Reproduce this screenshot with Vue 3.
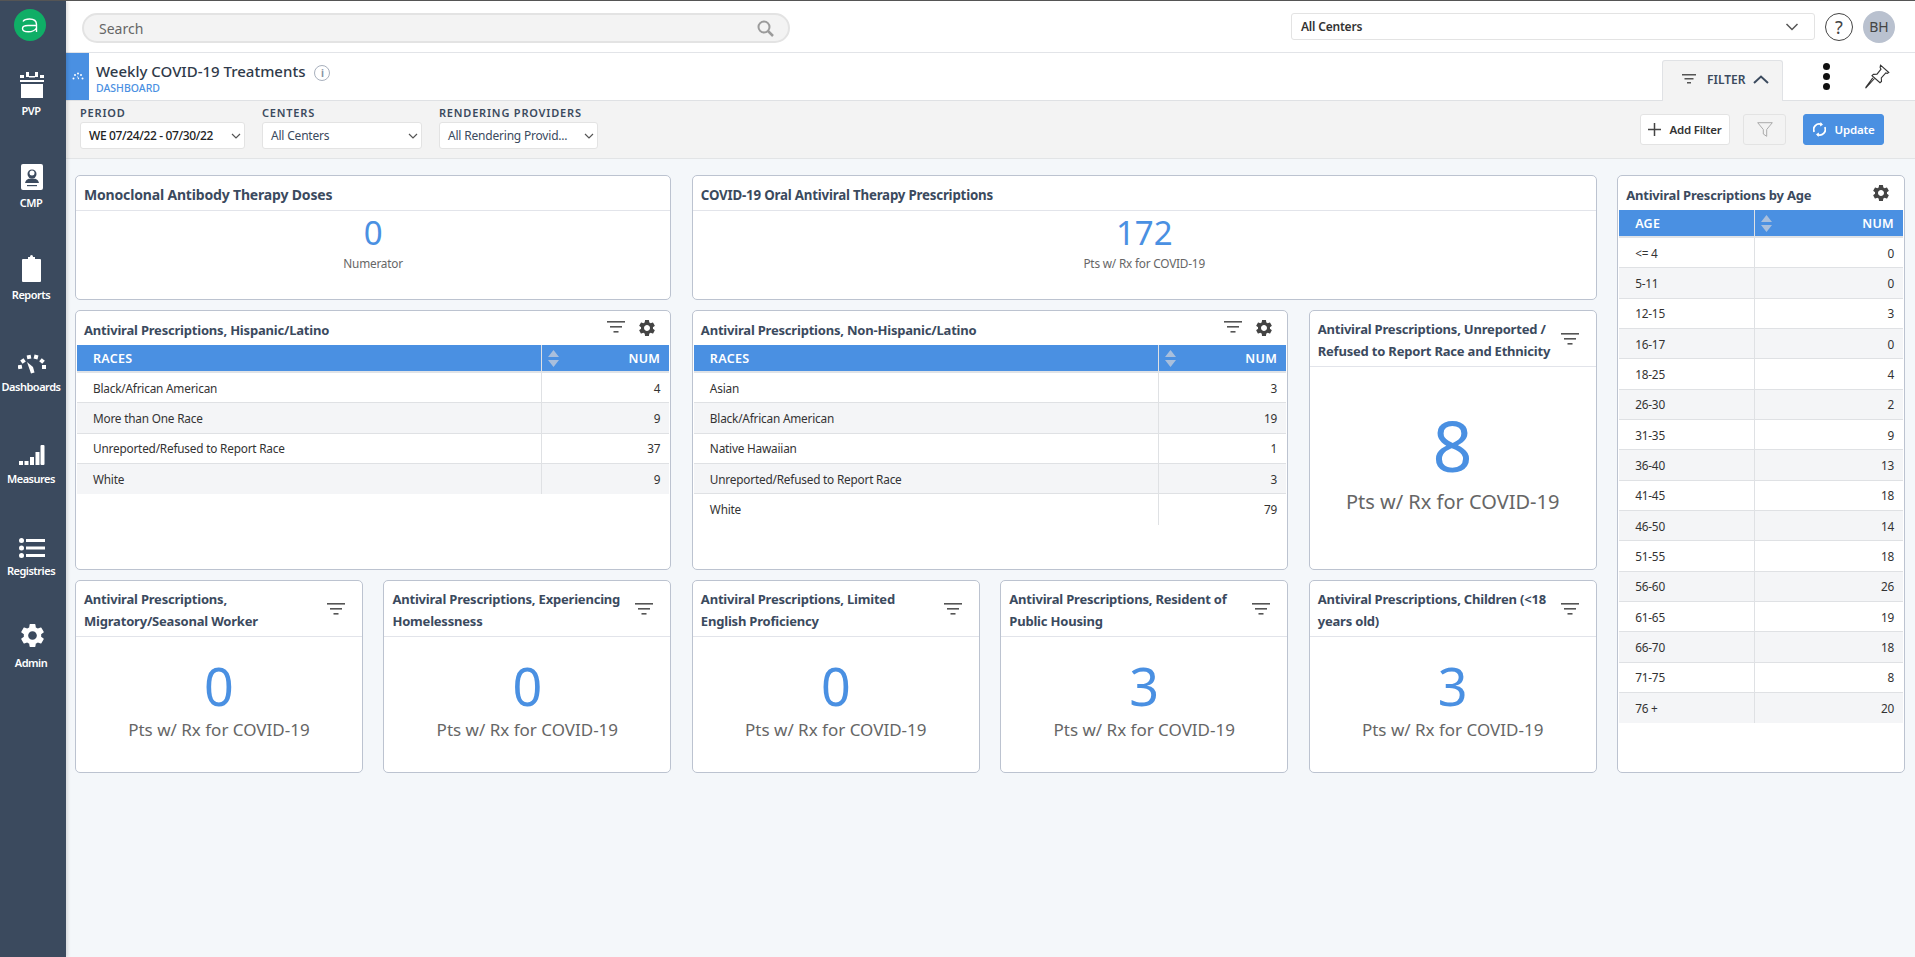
<template>
  <div class="app">
    <aside class="sidebar">
      <div class="logo">
        <svg width="32" height="32" viewBox="0 0 32 32">
          <circle cx="16" cy="16" r="16" fill="#0fae66" />
          <path d="M9 12.500C10 10.800 12.500 10 15.500 10c4.500 0 7 2 7 5.500V23M22.500 16.500H14c-3.500 0-5.500 1-5.500 3 0 2.300 2.500 3.300 6 3.300 3.500 0 6.500-1.300 8-3.800" fill="none" stroke="#fff" stroke-width="1.400" />
        </svg>
      </div>
      <nav class="nav">
        <a v-for="item in navItems" :key="item.label" class="nav-item">
          <span class="nav-icon" v-html="item.icon"></span>
          <span class="nav-label">{{ item.label }}</span>
        </a>
      </nav>
    </aside>

    <div class="content">
      <header class="topbar">
        <div class="search">
          <span>Search</span>
          <svg width="17" height="17" viewBox="0 0 17 17" fill="none" stroke="#9b9b9b" stroke-width="2">
            <circle cx="7" cy="7" r="5.500" />
            <path d="M11 11l5 5" stroke-width="2.500" />
          </svg>
        </div>
        <div class="center-select">
          <span>All Centers</span>
          <svg width="14" height="8" viewBox="0 0 14 8" fill="none" stroke="#555" stroke-width="1.500"><path d="M1.500 1l5.500 5.500L12.500 1" /></svg>
        </div>
        <div class="help">?</div>
        <div class="avatar">BH</div>
      </header>

      <section class="titlebar">
        <div class="title-tab">
          <svg width="12" height="9" viewBox="0 0 12 9" fill="#fff">
            <circle cx="1.500" cy="6.500" r="1" /><circle cx="3" cy="3" r="1" /><circle cx="6" cy="1.500" r="1" /><circle cx="9" cy="3" r="1" /><circle cx="10.500" cy="6.500" r="1" />
            <path d="M5 3.500l2.200 3-1 1z" />
          </svg>
        </div>
        <div class="title-text">
          <h1>Weekly COVID-19 Treatments <span class="info">i</span></h1>
          <div class="subtitle">DASHBOARD</div>
        </div>
        <div class="filter-tab">
          <svg class="filter-ico" width="14" height="11" viewBox="0 0 14 11" fill="#555"><rect width="14" height="1.500" /><rect x="2.500" y="4" width="9" height="1.500" /><rect x="5" y="8" width="4" height="1.500" /></svg>
          <span>FILTER</span>
          <svg width="16" height="9" viewBox="0 0 16 9" fill="none" stroke="#3b4a5e" stroke-width="2"><path d="M1 8l7-6.500L15 8" /></svg>
        </div>
        <div class="kebab"><i></i><i></i><i></i></div>
        <svg class="pin" width="25" height="25" viewBox="0 0 25 25" fill="none" stroke="#333" stroke-width="1.100">
          <path d="M15.500 1.200l8.300 7.300-1.500 1-1.500-.6-4.500 5 .2 3.500-1.500 1.300-8-7 1.400-1.300 3.600-.2 4-5-.9-1.800z" />
          <path d="M9.500 14.500L1 23.800l-.2-.5 7-9.500" />
        </svg>
      </section>

      <section class="filterbar">
        <div v-for="f in filters" :key="f.label" class="filter-field">
          <label>{{ f.label }}</label>
          <div class="select" :class="{ strong: f.strong }" :style="{ width: f.width + 'px' }">
            <span>{{ f.value }}</span>
            <svg width="10" height="6" viewBox="0 0 10 6" fill="none" stroke="#555" stroke-width="1.200"><path d="M1 1l4 4 4-4" /></svg>
          </div>
        </div>
        <div class="filter-actions">
          <button class="btn add">
            <svg width="13" height="13" viewBox="0 0 13 13" stroke="#444" stroke-width="1.500"><path d="M6.500 0v13M0 6.500h13" /></svg>
            Add Filter
          </button>
          <button class="btn funnel">
            <svg width="16" height="15" viewBox="0 0 16 15" fill="none" stroke="#aaa" stroke-width="1"><path d="M.7.700h14.600L9.700 7.500v6.800L6.300 12V7.500z" /></svg>
          </button>
          <button class="btn update">
            <svg width="13" height="15" viewBox="0 0 13 15" fill="none" stroke="#fff" stroke-width="1.800">
              <path d="M1.200 9.800A5.500 5.500 0 0 1 8.500 2.500M11.800 5.200A5.500 5.500 0 0 1 4.500 12.500" />
              <path d="M7.500 0l2.500 2.800L7 4.500zM5.500 15L3 12.200 6 10.500z" fill="#fff" stroke="none" />
            </svg>
            Update
          </button>
        </div>
      </section>

      <main class="grid">
        <div v-for="card in cards" :key="card.title" class="card" :class="card.area">
          <div class="card-head" :class="{ two: card.twoLine, plain: card.size === 'sm' }">
            <h2>{{ card.title }}</h2>
            <svg v-if="card.filter" class="head-filter" width="18" height="13" viewBox="0 0 18 13" fill="#555"><rect width="18" height="1.600" /><rect x="3" y="5" width="12" height="1.600" /><rect x="6.500" y="10" width="5" height="1.600" /></svg>
            <svg v-if="card.gear" class="head-gear" width="20" height="20" viewBox="0 0 24 24" fill="#444"><path d="M19.140 12.940c.04-.3.060-.61.060-.94 0-.32-.02-.64-.07-.94l2.030-1.580a.49.49 0 0 0 .12-.61l-1.920-3.320a.488.488 0 0 0-.59-.22l-2.390.96c-.5-.38-1.030-.7-1.620-.94l-.36-2.540a.484.484 0 0 0-.48-.41h-3.840c-.24 0-.43.170-.47.410l-.36 2.540c-.59.240-1.130.570-1.620.940l-2.390-.96c-.22-.08-.47 0-.59.220L2.740 8.870c-.12.210-.08.470.120.610l2.030 1.580c-.05.300-.09.630-.09.940s.02.640.070.940l-2.030 1.580a.49.49 0 0 0-.12.61l1.920 3.320c.12.220.370.290.590.220l2.390-.96c.5.380 1.030.7 1.620.94l.36 2.540c.05.240.240.410.480.410h3.840c.24 0 .44-.17.470-.41l.36-2.540c.59-.24 1.130-.56 1.620-.94l2.390.96c.22.080.470 0 .590-.22l1.920-3.320c.12-.22.070-.47-.12-.61l-2.010-1.580zM12 15.600c-1.980 0-3.600-1.620-3.600-3.600s1.620-3.600 3.600-3.600 3.600 1.620 3.600 3.600-1.620 3.600-3.600 3.600z" /></svg>
          </div>

          <div v-if="card.rows" class="table">
            <div class="thead">
              <div class="th first" :style="{ width: card.split + 'px' }">{{ card.col }}</div>
              <div class="th second">
                <svg width="11" height="17" viewBox="0 0 11 17" fill="#a9bfdc"><path d="M5.500 0L11 7H0zM0 10h11l-5.500 7z" /></svg>
                <span>NUM</span>
              </div>
            </div>
            <div v-for="(row, i) in card.rows" :key="row[0]" class="tr" :class="{ alt: i % 2 === 1, last: i === card.rows.length - 1 }">
              <div class="td first" :style="{ width: card.split + 'px' }">{{ row[0] }}</div>
              <div class="td second">{{ row[1] }}</div>
            </div>
          </div>

          <div v-else class="kpi" :class="card.size">
            <div class="kpi-value">{{ card.value }}</div>
            <div class="kpi-label">{{ card.label }}</div>
          </div>
        </div>
      </main>
    </div>
  </div>
</template>

<script setup>
const gauge = `<svg width="28" height="20" viewBox="0 0 28 20" fill="#fff"><rect x="0" y="11" width="4" height="4" transform="rotate(-10 2 13)"/><rect x="3" y="5" width="4" height="4" transform="rotate(-35 5 7)"/><rect x="9" y="1" width="4" height="4" transform="rotate(-10 11 3)"/><rect x="16" y="1" width="4" height="4" transform="rotate(15 18 3)"/><rect x="22" y="5" width="4" height="4" transform="rotate(40 24 7)"/><rect x="24" y="11" width="4" height="4"/><path d="M9 8l6 5 1.500 5.500-3.500 1z"/></svg>`

const navItems = [
  {
    label: 'PVP',
    icon: `<svg width="24" height="27" viewBox="0 0 24 27" fill="#fff"><rect x="0" y="9" width="24" height="2" /><rect x="0" y="13" width="22" height="14" transform="translate(1 0)"/><rect x="0" y="4" width="4" height="3"/><rect x="20" y="4" width="4" height="3"/><rect x="6" y="1" width="3" height="5"/><rect x="15" y="1" width="3" height="5"/><rect x="9" y="5" width="6" height="1.500"/></svg>`,
  },
  {
    label: 'CMP',
    icon: `<svg width="22" height="26" viewBox="0 0 22 26"><rect width="22" height="26" rx="2" fill="#fff"/><circle cx="11" cy="10" r="4.500" fill="#3b4a5e"/><path d="M4 19c1-4 4-4.500 7-4.500s6 .5 7 4.500z" fill="#3b4a5e"/><circle cx="11" cy="9" r="2.500" fill="#fff"/><rect x="6" y="21" width="10" height="1.200" fill="#3b4a5e"/></svg>`,
  },
  {
    label: 'Reports',
    icon: `<svg width="20" height="27" viewBox="0 0 20 27" fill="#fff"><rect y="4" width="19" height="23" rx="1" /><rect x="6" y="2" width="7" height="4" /><rect x="8" y="0" width="3" height="4" rx="1.500" /></svg>`,
  },
  { label: 'Dashboards', icon: gauge },
  {
    label: 'Measures',
    icon: `<svg width="26" height="21" viewBox="0 0 26 21" fill="#fff"><rect y="16" width="4" height="4"/><rect x="5.500" y="16" width="4" height="4"/><rect x="11" y="12" width="4" height="8"/><rect x="16.500" y="7" width="4" height="13"/><rect x="21.500" y="0" width="4" height="20" rx="1"/></svg>`,
  },
  {
    label: 'Registries',
    icon: `<svg width="26" height="20" viewBox="0 0 26 20" fill="#fff"><circle cx="2.500" cy="2.500" r="2.500"/><circle cx="2.500" cy="10" r="2.500"/><circle cx="2.500" cy="17.500" r="2.500"/><rect x="7" y="1" width="19" height="3"/><rect x="7" y="8.500" width="19" height="3"/><rect x="7" y="16" width="19" height="3"/></svg>`,
  },
  {
    label: 'Admin',
    icon: `<svg width="29" height="29" viewBox="0 0 24 24" fill="#fff"><path d="M19.140 12.940c.04-.3.060-.61.060-.94 0-.32-.02-.64-.07-.94l2.030-1.580a.49.49 0 0 0 .12-.61l-1.920-3.320a.488.488 0 0 0-.59-.22l-2.390.96c-.5-.38-1.030-.7-1.620-.94l-.36-2.540a.484.484 0 0 0-.48-.41h-3.840c-.24 0-.43.170-.47.410l-.36 2.540c-.59.240-1.130.570-1.620.940l-2.390-.96c-.22-.08-.47 0-.59.220L2.740 8.870c-.12.210-.08.470.120.610l2.030 1.580c-.05.300-.09.630-.09.940s.02.640.070.940l-2.030 1.580a.49.49 0 0 0-.12.61l1.920 3.320c.12.220.370.290.590.220l2.390-.96c.5.380 1.030.7 1.620.94l.36 2.540c.05.240.240.410.480.410h3.840c.24 0 .44-.17.470-.41l.36-2.540c.59-.24 1.130-.56 1.620-.94l2.390.96c.22.080.470 0 .590-.22l1.920-3.320c.12-.22.070-.47-.12-.61l-2.010-1.580zM12 15.600c-1.980 0-3.600-1.620-3.600-3.600s1.620-3.600 3.600-3.600 3.600 1.620 3.600 3.600-1.620 3.600-3.600 3.600z"/></svg>`,
  },
]

const filters = [
  { label: 'PERIOD', value: 'WE 07/24/22 - 07/30/22', width: 165, strong: true },
  { label: 'CENTERS', value: 'All Centers', width: 160 },
  { label: 'RENDERING PROVIDERS', value: 'All Rendering Provid...', width: 159 },
]

const pts = 'Pts w/ Rx for COVID-19'

const cards = [
  { title: 'Monoclonal Antibody Therapy Doses', area: 'a-mono', value: '0', label: 'Numerator', size: 'sm' },
  { title: 'COVID-19 Oral Antiviral Therapy Prescriptions', area: 'a-oral', value: '172', label: pts, size: 'sm' },
  {
    title: 'Antiviral Prescriptions by Age',
    area: 'a-age',
    gear: true,
    col: 'AGE',
    split: 136,
    rows: [
      ['<= 4', 0], ['5-11', 0], ['12-15', 3], ['16-17', 0], ['18-25', 4], ['26-30', 2], ['31-35', 9], ['36-40', 13],
      ['41-45', 18], ['46-50', 14], ['51-55', 18], ['56-60', 26], ['61-65', 19], ['66-70', 18], ['71-75', 8], ['76 +', 20],
    ],
  },
  {
    title: 'Antiviral Prescriptions, Hispanic/Latino',
    area: 'a-his',
    filter: true,
    gear: true,
    col: 'RACES',
    split: 465,
    rows: [['Black/African American', 4], ['More than One Race', 9], ['Unreported/Refused to Report Race', 37], ['White', 9]],
  },
  {
    title: 'Antiviral Prescriptions, Non-Hispanic/Latino',
    area: 'a-non',
    filter: true,
    gear: true,
    col: 'RACES',
    split: 465,
    rows: [['Asian', 3], ['Black/African American', 19], ['Native Hawaiian', 1], ['Unreported/Refused to Report Race', 3], ['White', 79]],
  },
  { title: 'Antiviral Prescriptions, Unreported / Refused to Report Race and Ethnicity', area: 'a-unr', filter: true, twoLine: true, value: '8', label: pts, size: 'lg' },
  { title: 'Antiviral Prescriptions, Migratory/Seasonal Worker', filter: true, twoLine: true, value: '0', label: pts, size: 'md' },
  { title: 'Antiviral Prescriptions, Experiencing Homelessness', filter: true, twoLine: true, value: '0', label: pts, size: 'md' },
  { title: 'Antiviral Prescriptions, Limited English Proficiency', filter: true, twoLine: true, value: '0', label: pts, size: 'md' },
  { title: 'Antiviral Prescriptions, Resident of Public Housing', filter: true, twoLine: true, value: '3', label: pts, size: 'md' },
  { title: 'Antiviral Prescriptions, Children (<18 years old)', filter: true, twoLine: true, value: '3', label: pts, size: 'md' },
]
</script>

<style scoped>
.app {
  display: flex;
  height: 957px;
  font-family: "Noto Sans", "Open Sans", sans-serif;
  color: #333;
  background: #f4f7fa;
  border-top: 1px solid #555;
  box-sizing: border-box;
  overflow: hidden;
}

.sidebar {
  width: 66px;
  flex: none;
  background: #3b4a5e;
  box-shadow: 2px 0 3px rgba(0, 0, 0, 0.12);
  z-index: 1;
  display: flex;
  flex-direction: column;
  align-items: center;
}
.logo {
  height: 32px;
  margin-top: 8px;
  margin-left: -6px;
}
.nav {
  margin-top: 23px;
  display: flex;
  flex-direction: column;
  width: 100%;
}
.nav-item {
  height: 92px;
  display: flex;
  flex-direction: column;
  align-items: center;
  color: #fff;
}
.nav-icon {
  height: 34px;
  display: flex;
  align-items: flex-end;
  justify-content: center;
  margin-left: -2px;
}
.nav-label {
  margin-top: 6px;
  margin-left: -4px;
  font-size: 11px;
  font-weight: 600;
  letter-spacing: -0.5px;
  line-height: 14px;
  white-space: nowrap;
}

.content {
  flex: 1;
  min-width: 0;
  display: flex;
  flex-direction: column;
}

.topbar {
  height: 52px;
  flex: none;
  box-sizing: border-box;
  background: #fff;
  border-bottom: 1px solid #e2e4e8;
  display: flex;
  align-items: center;
  padding: 0 20px 0 16px;
}
.search {
  width: 708px;
  height: 30px;
  margin-top: 3px;
  box-sizing: border-box;
  border: 2px solid #e3e3e3;
  border-radius: 15px;
  background: #f3f3f3;
  color: #666;
  font-size: 14px;
  display: flex;
  align-items: center;
  justify-content: space-between;
  padding: 0 14px 0 15px;
}
.center-select {
  margin-left: auto;
  width: 524px;
  height: 27px;
  box-sizing: border-box;
  border: 1px solid #e3e3e3;
  border-radius: 3px;
  font-size: 12px;
  font-weight: 600;
  letter-spacing: -0.2px;
  color: #333;
  display: flex;
  align-items: center;
  justify-content: space-between;
  padding: 0 15px 0 9px;
}
.help {
  margin-left: 10px;
  width: 28px;
  height: 28px;
  box-sizing: border-box;
  border: 1px solid #444;
  border-radius: 50%;
  font-size: 18px;
  color: #444;
  display: flex;
  align-items: center;
  justify-content: center;
}
.avatar {
  margin-left: 10px;
  width: 32px;
  height: 32px;
  border-radius: 50%;
  background: #b9c1cf;
  color: #444;
  font-size: 14px;
  display: flex;
  align-items: center;
  justify-content: center;
}

.titlebar {
  height: 48px;
  flex: none;
  box-sizing: border-box;
  background: #fff;
  border-bottom: 1px solid #dfe1e4;
  display: flex;
  align-items: stretch;
}
.title-tab {
  width: 23px;
  flex: none;
  background: #4a90e2;
  display: flex;
  align-items: center;
  justify-content: center;
}
.title-text {
  margin-left: 7px;
  padding-top: 8px;
}
h1 {
  margin: 0;
  font-size: 15px;
  font-weight: 500;
  line-height: 20px;
  color: #2f3a4a;
  display: flex;
  align-items: center;
  gap: 9px;
}
.info {
  width: 16px;
  height: 16px;
  box-sizing: border-box;
  border: 1px solid #a8b0bd;
  border-radius: 50%;
  font-size: 10px;
  line-height: 14px;
  text-align: center;
  color: #8a94a3;
  font-weight: 700;
  margin-top: 3px;
}
.subtitle {
  font-size: 10.500px;
  line-height: 13px;
  margin-top: 1px;
  color: #4a90e2;
  font-weight: 500;
}
.filter-tab {
  margin-left: auto;
  margin-top: 7px;
  margin-bottom: -1px;
  width: 121px;
  box-sizing: border-box;
  background: #f3f3f3;
  border: 1px solid #e0e2e5;
  border-bottom: none;
  border-radius: 3px 3px 0 0;
  display: flex;
  align-items: center;
  padding: 0 0 4px 19px;
  font-size: 12px;
  font-weight: 600;
  color: #3b4a5e;
}
.filter-ico {
  margin-right: 11px;
}
.filter-tab span {
  margin-right: 8px;
}
.kebab {
  margin-left: 40px;
  width: 7px;
  display: flex;
  flex-direction: column;
  justify-content: center;
  gap: 3px;
  padding-bottom: 1px;
}
.kebab i {
  width: 7px;
  height: 7px;
  border-radius: 50%;
  background: #111;
}
.pin {
  align-self: center;
  margin: 0 25px 0 35px;
}

.filterbar {
  height: 58px;
  flex: none;
  box-sizing: border-box;
  background: #f3f3f3;
  border-bottom: 1px solid #e2e4e6;
  display: flex;
  padding: 3px 31px 0 14px;
  gap: 17px;
}
.filter-field label {
  display: block;
  font-size: 11px;
  line-height: 17px;
  margin-bottom: 1px;
  font-weight: 600;
  letter-spacing: 0.8px;
  color: #3b4a5e;
}
.select {
  height: 27px;
  box-sizing: border-box;
  background: #fff;
  border: 1px solid #e3e3e3;
  border-radius: 3px;
  font-size: 12px;
  letter-spacing: -0.2px;
  color: #3b4a5e;
  display: flex;
  align-items: center;
  justify-content: space-between;
  padding: 0 3px 0 8px;
  white-space: nowrap;
}
.select.strong {
  color: #222;
  font-weight: 500;
  letter-spacing: -0.36px;
}
.filter-actions {
  margin-left: auto;
  display: flex;
  gap: 13px;
  padding-top: 10px;
}
.btn {
  height: 31px;
  box-sizing: border-box;
  border: 1px solid #e3e3e3;
  border-radius: 3px;
  background: #fff;
  font: 600 11.500px "Noto Sans", sans-serif;
  letter-spacing: -0.2px;
  color: #333;
  display: flex;
  align-items: center;
  justify-content: center;
  padding: 0;
}
.add {
  width: 90px;
  gap: 8px;
}
.funnel {
  width: 43px;
  background: #f3f3f3;
}
.update {
  width: 81px;
  margin-left: 4px;
  background: #4a90e2;
  border-color: #4a90e2;
  color: #fff;
  gap: 9px;
}

.grid {
  flex: 1;
  display: grid;
  grid-template-columns: repeat(6, 1fr);
  grid-template-rows: 125px 260px 193px;
  gap: 10px 20.600px;
  padding: 16px 10px 0 9px;
  align-content: start;
}
.a-mono { grid-column: 1 / span 2; grid-row: 1; }
.a-oral { grid-column: 3 / span 3; grid-row: 1; }
.a-age { grid-column: 6; grid-row: 1 / span 3; }
.a-his { grid-column: 1 / span 2; grid-row: 2; }
.a-non { grid-column: 3 / span 2; grid-row: 2; }
.a-unr { grid-column: 5; grid-row: 2; }

.card {
  box-sizing: border-box;
  background: #fff;
  border: 1px solid #bcc3d0;
  border-radius: 5px;
  display: flex;
  flex-direction: column;
  min-width: 0;
  overflow: hidden;
}
.card-head {
  height: 34px;
  flex: none;
  box-sizing: border-box;
  display: flex;
  align-items: center;
  padding: 3px 13px 0 8px;
  gap: 10px;
}
.card-head.plain {
  height: 35px;
  border-bottom: 1px solid #e2e4ea;
}
.card-head.two {
  height: 56px;
  padding-right: 17px;
  border-bottom: 1px solid #e2e4ea;
}
h2 {
  flex: 1;
  margin: 0;
  font-size: 13px;
  font-weight: 700;
  line-height: 22px;
  letter-spacing: -0.2px;
  color: #3b4a5e;
}
.a-mono h2 {
  font-size: 14px;
  letter-spacing: -0.17px;
}
.a-oral h2 {
  font-size: 13.300px;
}
.head-gear {
  margin-left: 2px;
  margin-bottom: 4px;
}
.head-filter {
  margin-bottom: 4px;
}
.card-head.two .head-filter {
  margin: 0 0 2px;
}

.table {
  margin: 0 1px;
}
.thead {
  display: flex;
  height: 28px;
  background: #4a90e2;
  border-bottom: 2px solid #e0e3e7;
  box-sizing: border-box;
  color: #fff;
  font-size: 12.500px;
  font-weight: 600;
  letter-spacing: 0.3px;
}
.tr {
  display: flex;
  height: 30.330px;
  box-sizing: border-box;
  border-bottom: 1px solid #dfe1e4;
  font-size: 11.800px;
  letter-spacing: -0.2px;
  color: #333;
}
.tr.alt {
  background: #f4f5f7;
}
.tr.last {
  border-bottom: none;
}
.first {
  flex: none;
  box-sizing: border-box;
  padding-left: 16px;
  border-right: 1px solid #dfe1e4;
  display: flex;
  align-items: center;
}
.second {
  flex: 1;
  display: flex;
  align-items: center;
  justify-content: flex-end;
  padding-right: 9px;
}
.th.second {
  justify-content: space-between;
  padding-left: 6px;
}

.kpi {
  flex: 1;
  display: flex;
  flex-direction: column;
  align-items: center;
  color: #666;
}
.kpi-value {
  color: #4a90e2;
}
.kpi.sm {
  padding-top: 2px;
}
.kpi.sm .kpi-value {
  font-size: 33px;
  line-height: 40px;
}
.kpi.sm .kpi-label {
  font-size: 11.800px;
  letter-spacing: -0.2px;
  line-height: 20px;
}
.kpi.md,
.kpi.lg {
  justify-content: center;
  padding-bottom: 13px;
}
.kpi.lg {
  padding-bottom: 17px;
}
.kpi.md .kpi-value {
  font-size: 52px;
  line-height: 64px;
}
.kpi.md .kpi-label {
  font-size: 17px;
  line-height: 24px;
}
.kpi.lg .kpi-value {
  font-size: 70px;
  line-height: 84px;
}
.kpi.lg .kpi-label {
  font-size: 20px;
  line-height: 30px;
}
</style>
